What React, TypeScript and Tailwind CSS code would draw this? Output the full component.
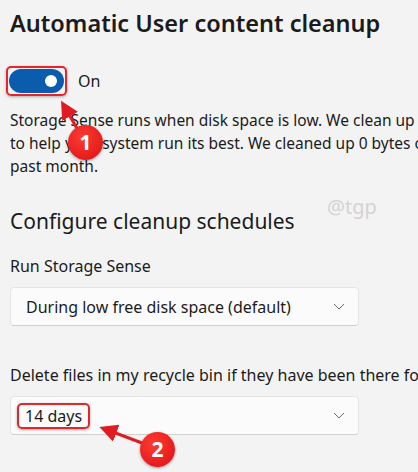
import { JSX } from "react";

function Chevron(): JSX.Element {
  return (
    <svg width="12" height="7" viewBox="0 0 12 7" fill="none" className="shrink-0">
      <path d="M1 1l5 5 5-5" stroke="#6b6b6b" strokeWidth="1" />
    </svg>
  );
}

function Badge({ n, x, y }: { n: string; x: number; y: number }): JSX.Element {
  return (
    <div
      className="absolute flex h-[35px] w-[35px] items-center justify-center rounded-full bg-[radial-gradient(circle_at_40%_35%,#ff3b30,#d90f16)] text-[21px] font-bold text-white shadow-[0_1px_3px_rgba(0,0,0,0.35)]"
      style={{ left: x, top: y }}
    >
      {n}
    </div>
  );
}

export default function App(): JSX.Element {
  return (
    <div className="relative h-[472px] w-[418px] overflow-hidden bg-[#f3f3f3] pl-[10px] pt-[7px] font-['Noto_Sans',sans-serif] text-[#1b1b1b]">
      <h1 className="whitespace-nowrap text-[23.5px] font-semibold leading-[32px]">
        Automatic User content cleanup
      </h1>

      <div className="mt-[27px] flex items-center">
        <div className="-ml-[4px] inline-flex rounded-[5px] border-2 border-[#e5252b] p-[1px] shadow-[0_1px_3px_rgba(0,0,0,0.3)]">
          <div className="flex h-[24px] w-[55px] items-center justify-end rounded-full bg-[#0b5cad] pr-[7px]">
            <div className="h-[12px] w-[12px] rounded-full bg-white" />
          </div>
        </div>
        <span className="ml-[11px] text-[16px]">On</span>
      </div>

      <div className="mt-[13px] whitespace-nowrap text-[15.5px] leading-[23px]">
        <div>Storage Sense runs when disk space is low. We clean up enough space</div>
        <div>to help your system run its best. We cleaned up 0 bytes of space in the</div>
        <div>past month.</div>
      </div>

      <h2 className="mt-[29px] whitespace-nowrap text-[21px] leading-[28px]">
        Configure cleanup schedules
      </h2>

      <div className="mt-[21px] text-[16px] leading-[21px]">Run Storage Sense</div>
      <div className="mt-[10px] flex h-[39px] w-[349px] items-center justify-between rounded-[4px] border border-[#e5e5e5] border-b-[#d0d0d0] bg-[#fbfbfb] pl-[15px] pr-[13px] text-[16px]">
        <span>During low free disk space (default)</span>
        <Chevron />
      </div>

      <div className="mt-[38px] whitespace-nowrap text-[16px] leading-[22px]">
        Delete files in my recycle bin if they have been there for over
      </div>
      <div className="mt-[10px] flex h-[39px] w-[349px] items-center justify-between rounded-[4px] border border-[#e5e5e5] border-b-[#d0d0d0] bg-[#fbfbfb] pl-[6px] pr-[13px] text-[16px]">
        <span className="rounded-[5px] border-2 border-[#e5252b] px-[6px] leading-[22px] shadow-[0_1px_3px_rgba(0,0,0,0.3)]">
          14 days
        </span>
        <Chevron />
      </div>

      <div className="absolute left-[327px] top-[192px] text-[20px] text-[#d3d3d3]">@tgp</div>

      <svg className="pointer-events-none absolute left-0 top-0" width="418" height="472">
        <defs>
          <marker id="ah" markerWidth="6" markerHeight="6" refX="4" refY="3" orient="auto">
            <path d="M0 0L6 3L0 6z" fill="#e01b22" />
          </marker>
        </defs>
        <line x1="78" y1="130" x2="64" y2="106" stroke="#e01b22" strokeWidth="3" markerEnd="url(#ah)" />
        <line x1="142" y1="443" x2="105" y2="429" stroke="#e01b22" strokeWidth="3" markerEnd="url(#ah)" />
      </svg>

      <Badge n="1" x={68} y={125} />
      <Badge n="2" x={140} y={432} />
    </div>
  );
}
